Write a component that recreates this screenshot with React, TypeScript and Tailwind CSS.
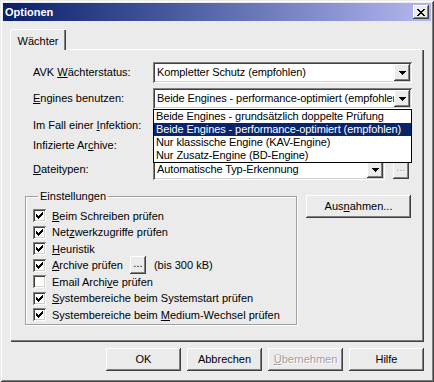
import type { ReactNode } from 'react';

const RAISED =
  'shadow-[inset_-1px_-1px_#404040,inset_1px_1px_#ffffff,inset_-2px_-2px_#808080,inset_2px_2px_#ebebeb]';
const SUNKEN =
  'shadow-[inset_1px_1px_#808080,inset_-1px_-1px_#ffffff,inset_2px_2px_#404040,inset_-2px_-2px_#d4d0c8]';

const CLOSE_X = ['##....##', '.##..##.', '..####..', '...##...', '..####..', '.##..##.', '##....##'];
// classic 7x7 check glyph, one 3px run per column
const CHECK_RUNS = [2, 3, 4, 3, 2, 1, 0];

function U({ children }: { children: ReactNode }) {
  return <span className="underline underline-offset-[1px]">{children}</span>;
}

function Arrow() {
  return (
    <svg width="7" height="4" viewBox="0 0 7 4" shapeRendering="crispEdges">
      <path d="M0 0h7v1h-1v1h-1v1h-1v1h-1v-1h-1v-1h-1v-1h-1z" fill="#000" />
    </svg>
  );
}

function Combo({ value, className }: { value: string; className: string }) {
  return (
    <div className={`flex items-center h-[21px] bg-white p-[2px] ${SUNKEN} ${className}`}>
      <span className="flex-1 pl-[2px] overflow-hidden whitespace-nowrap tracking-[-0.1px]">{value}</span>
      <div className={`w-[16px] h-[17px] flex items-center justify-center flex-shrink-0 bg-[#ebebeb] ${RAISED}`}>
        <Arrow />
      </div>
    </div>
  );
}

function Check({ checked, label, extra }: { checked: boolean; label: ReactNode; extra?: ReactNode }) {
  return (
    <div className="flex items-center h-[16.5px]">
      <div className={`w-[13px] h-[13px] bg-white flex items-center justify-center flex-shrink-0 ${SUNKEN}`}>
        {checked && (
          <svg width="7" height="7" viewBox="0 0 7 7" shapeRendering="crispEdges">
            {CHECK_RUNS.map((y, x) => (
              <rect key={x} x={x} y={y} width="1" height="3" fill="#000" />
            ))}
          </svg>
        )}
      </div>
      <span className="ml-[6px] whitespace-nowrap">{label}</span>
      {extra}
    </div>
  );
}

function Button({ children, disabled, className }: { children: ReactNode; disabled?: boolean; className?: string }) {
  return (
    <button
      className={`h-[23px] w-[75px] bg-[#ebebeb] flex items-center justify-center ${RAISED} ${
        disabled ? 'text-[#a0a0a0] [text-shadow:1px_1px_#ffffff]' : 'text-black'
      } ${className ?? ''}`}
    >
      <span>{children}</span>
    </button>
  );
}

const ENGINE_OPTIONS = [
  'Beide Engines - grundsätzlich doppelte Prüfung',
  'Beide Engines - performance-optimiert (empfohlen)',
  'Nur klassische Engine (KAV-Engine)',
  'Nur Zusatz-Engine (BD-Engine)',
];

export default function App() {
  return (
    <div className="w-[434px] h-[382px] bg-[#ebebeb] p-[3px] flex flex-col text-[11px] text-black font-['Liberation_Sans',Arial,sans-serif] shadow-[inset_1px_1px_#ebebeb,inset_-1px_-1px_#404040,inset_2px_2px_#ffffff,inset_-2px_-2px_#808080]">
      {/* Title bar */}
      <div className="h-[18px] flex items-center justify-between pl-[2px] pr-[2px] bg-linear-to-r from-[#0a1e6a] to-[#b6b8f0]">
        <span className="text-white font-bold">Optionen</span>
        <div className={`w-[16px] h-[14px] bg-[#ebebeb] flex items-center justify-center ${RAISED}`}>
          <svg width="8" height="7" viewBox="0 0 8 7" shapeRendering="crispEdges">
            {CLOSE_X.flatMap((row, y) =>
              row.split('').map((c, x) => (c === '#' ? <rect key={`${x}-${y}`} x={x} y={y} width="1" height="1" fill="#000" /> : null))
            )}
          </svg>
        </div>
      </div>

      {/* Tabs */}
      <div className="pl-[7px] pr-[7px] pt-[8px]">
        <div className="flex">
          <div className="relative z-10 -mb-px w-[56px] h-[21px] bg-[#ebebeb] rounded-tl-[2px] flex items-start justify-center pt-[4px] shadow-[inset_1px_1px_#ffffff,inset_-1px_0_#404040,inset_-2px_0_#808080]">
            Wächter
          </div>
        </div>

        <div className="relative w-[414px] h-[293px] pl-[23px] pr-[12px] pt-[13px] shadow-[inset_1px_1px_#ffffff,inset_-1px_-1px_#404040,inset_-2px_-2px_#808080]">
          <div className="flex items-center h-[21px]">
            <span className="w-[120px]">
              AVK <U>W</U>ächterstatus:
            </span>
            <Combo value="Kompletter Schutz (empfohlen)" className="w-[259px]" />
          </div>
          <div className="flex items-center h-[21px] mt-[5px]">
            <span className="w-[120px]">
              <U>E</U>ngines benutzen:
            </span>
            <Combo value="Beide Engines - performance-optimiert (empfohlen)" className="w-[259px]" />
          </div>
          <div className="flex items-center h-[20px] mt-[6px]">
            <span>
              Im Fall einer <U>I</U>nfektion:
            </span>
          </div>
          <div className="flex items-center h-[20px]">
            <span>
              Infizierte Ar<U>c</U>hive:
            </span>
          </div>
          <div className="flex items-center h-[21px] mt-[4px]">
            <span className="w-[120px]">
              <U>D</U>ateitypen:
            </span>
            <Combo value="Automatische Typ-Erkennung" className="w-[232px]" />
            <div className={`ml-[8px] w-[16px] h-[18px] flex items-end justify-center pb-[3px] text-[#a0a0a0] [text-shadow:1px_1px_#ffffff] ${RAISED}`}>
              ...
            </div>
          </div>

          <div className="flex mt-[8px] -ml-[8px]">
            <fieldset className="w-[272px] h-[137px] border border-[#a0a0a0] shadow-[inset_1px_1px_#ffffff,1px_1px_#ffffff] pl-[7px] pt-[3px]">
              <legend className="ml-[5px] px-[2px]">Einstellungen</legend>
              <Check checked label={<><U>B</U>eim Schreiben prüfen</>} />
              <Check checked label={<>Net<U>z</U>werkzugriffe prüfen</>} />
              <Check checked label={<><U>H</U>euristik</>} />
              <Check
                checked
                label={<><U>A</U>rchive prüfen</>}
                extra={
                  <>
                    <div className={`ml-[7px] w-[16px] h-[18px] flex items-end justify-center pb-[3px] flex-shrink-0 ${RAISED}`}>...</div>
                    <span className="ml-[8px] whitespace-nowrap">(bis 300 kB)</span>
                  </>
                }
              />
              <Check checked={false} label={<>Email Archi<U>v</U>e prüfen</>} />
              <Check checked label={<><U>S</U>ystembereiche beim Systemstart prüfen</>} />
              <Check checked label={<>Systembereiche beim <U>M</U>edium-Wechsel prüfen</>} />
            </fieldset>
            <Button className="ml-[9px] mt-[7px] w-[105px] h-[22px]">
              Aus<U>n</U>ahmen...
            </Button>
          </div>

          {/* open dropdown of the engines combo */}
          <div className="absolute left-[143px] top-[60px] w-[259px] bg-white border border-black z-20 tracking-[-0.1px]">
            {ENGINE_OPTIONS.map((o, i) => (
              <div
                key={o}
                className={`h-[13px] leading-[13px] pl-[2px] whitespace-nowrap ${i === 1 ? 'bg-[#0a246a] text-white' : ''}`}
              >
                {o}
              </div>
            ))}
          </div>
        </div>
      </div>

      {/* Dialog buttons */}
      <div className="flex justify-end gap-[6px] pr-[7px] mt-[6px]">
        <Button>OK</Button>
        <Button>Abbrechen</Button>
        <Button disabled>
          <U>Ü</U>bernehmen
        </Button>
        <Button>Hilfe</Button>
      </div>
    </div>
  );
}
